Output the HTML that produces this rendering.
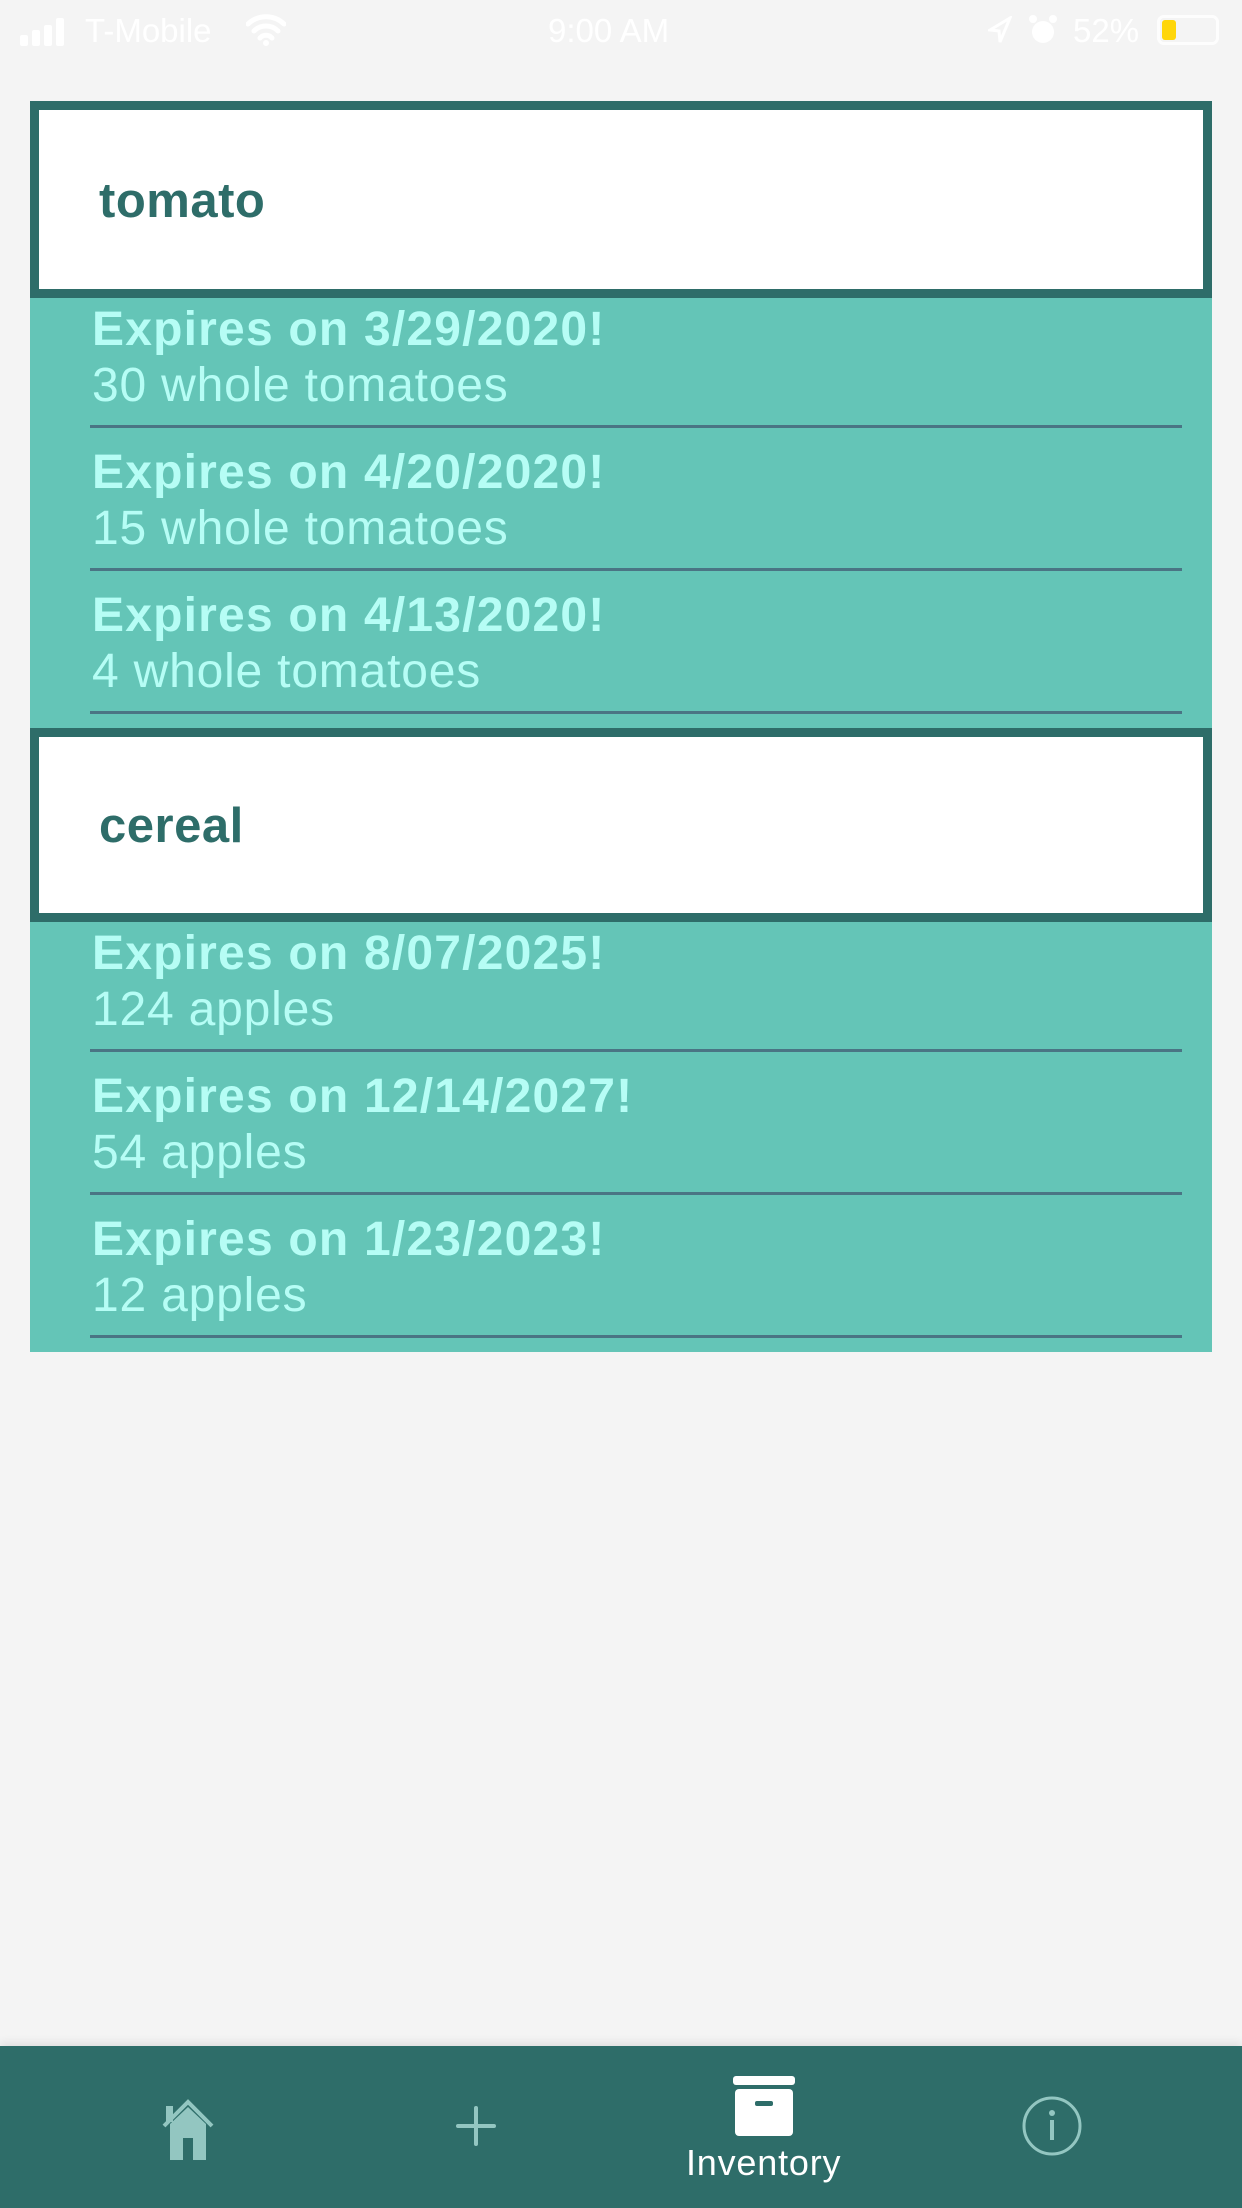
<!DOCTYPE html>
<html><head><meta charset="utf-8">
<style>
*{margin:0;padding:0;box-sizing:border-box}
body{width:1242px;height:2208px;background:#f4f4f4;position:relative;overflow:hidden;font-family:"Liberation Sans",sans-serif}
.status{position:absolute;top:0;left:0;width:1242px;height:62px;color:#fff;font-size:33px}
.card{position:absolute;left:30px;width:1182px;background:#fff;border:9px solid #2e6d69}
.card span{position:absolute;left:60px;font-weight:bold;font-size:49px;color:#2e6d69;letter-spacing:0.5px}
.list{position:absolute;left:30px;width:1182px;background:#64c5b7}
.row{position:relative;height:143px}
.row b{position:absolute;left:62px;top:4px;font-size:48px;color:#b6fdf5;white-space:nowrap;letter-spacing:1.2px}
.row i{position:absolute;left:62px;top:60px;font-style:normal;font-size:48px;color:#b6fdf5;white-space:nowrap;letter-spacing:0.8px}
.row u{position:absolute;left:60px;right:30px;top:127px;height:3px;background:#4a7584;text-decoration:none}
.bar{position:absolute;left:0;top:2046px;width:1242px;height:162px;background:#2e6d69;box-shadow:0 -4px 8px rgba(0,0,0,0.08)}
</style></head><body>
<div class="status">
 <div style="position:absolute;left:20px;top:18px;display:flex;align-items:flex-end;gap:4px">
  <div style="width:8px;height:11px;background:#fff;border-radius:2px"></div>
  <div style="width:8px;height:16px;background:#fff;border-radius:2px"></div>
  <div style="width:8px;height:21px;background:#fff;border-radius:2px"></div>
  <div style="width:8px;height:28px;background:#fff;border-radius:2px"></div>
 </div>
 <div style="position:absolute;left:85px;top:12px">T-Mobile</div>
 <svg style="position:absolute;left:246px;top:12px" width="40" height="34" viewBox="0 0 40 34"><path d="M2 12 A26 26 0 0 1 38 12 M8 19 A17 17 0 0 1 32 19 M14 26 A8 8 0 0 1 26 26" fill="none" stroke="#fff" stroke-width="5" stroke-linecap="round"/><circle cx="20" cy="31" r="3" fill="#fff"/></svg>
 <div style="position:absolute;left:548px;top:12px">9:00 AM</div>
 <svg style="position:absolute;left:988px;top:16px" width="24" height="28" viewBox="0 0 24 28"><path d="M22 2 L2 14 L11 15 L12 26 Z" fill="none" stroke="#fff" stroke-width="3"/></svg>
 <svg style="position:absolute;left:1028px;top:14px" width="30" height="32" viewBox="0 0 30 32"><circle cx="15" cy="18" r="11" fill="#fff"/><circle cx="5" cy="5" r="4" fill="#fff"/><circle cx="25" cy="5" r="4" fill="#fff"/></svg>
 <div style="position:absolute;left:1073px;top:12px">52%</div>
 <div style="position:absolute;left:1157px;top:15px;width:62px;height:30px;border:3px solid #fff;border-radius:7px;opacity:.8"></div>
 <div style="position:absolute;left:1162px;top:20px;width:14px;height:20px;background:#ffd60a;border-radius:3px"></div>
</div>

<div class="card" style="top:101px;height:197px"><span style="top:63px">tomato</span></div>
<div class="list" style="top:298px;height:430px">
 <div class="row"><b>Expires on 3/29/2020!</b><i>30 whole tomatoes</i><u></u></div>
 <div class="row"><b>Expires on 4/20/2020!</b><i>15 whole tomatoes</i><u></u></div>
 <div class="row"><b>Expires on 4/13/2020!</b><i>4 whole tomatoes</i><u></u></div>
</div>
<div class="card" style="top:728px;height:194px"><span style="top:61px">cereal</span></div>
<div class="list" style="top:922px;height:430px">
 <div class="row"><b>Expires on 8/07/2025!</b><i>124 apples</i><u></u></div>
 <div class="row"><b>Expires on 12/14/2027!</b><i>54 apples</i><u></u></div>
 <div class="row"><b>Expires on 1/23/2023!</b><i>12 apples</i><u></u></div>
</div>

<div class="bar">
 <svg style="position:absolute;left:156px;top:52px" width="64" height="64" viewBox="0 0 64 64">
  <path d="M8 28 L32 4 L56 28" fill="none" stroke="#93c6c1" stroke-width="4"/>
  <path d="M14 26 L32 9 L50 26 V62 H37 V40 H27 V62 H14 Z" fill="#93c6c1"/>
  <rect x="10" y="8" width="7" height="16" fill="#93c6c1"/>
 </svg>
 <svg style="position:absolute;left:456px;top:60px" width="40" height="40" viewBox="0 0 40 40">
  <path d="M20 2V38M2 20H38" stroke="#93c6c1" stroke-width="4" stroke-linecap="round"/>
 </svg>
 <svg style="position:absolute;left:733px;top:30px" width="62" height="60" viewBox="0 0 62 60">
  <rect x="0" y="0" width="62" height="9" rx="3" fill="#fff"/>
  <rect x="2" y="13" width="58" height="47" rx="4" fill="#fff"/>
  <rect x="22" y="25" width="18" height="5" rx="2" fill="#2e6d69"/>
 </svg>
 <div style="position:absolute;left:686px;top:96px;font-size:36px;color:#fff;letter-spacing:0.8px">Inventory</div>
 <svg style="position:absolute;left:1020px;top:48px" width="64" height="64" viewBox="0 0 64 64">
  <circle cx="32" cy="32" r="28" fill="none" stroke="#93c6c1" stroke-width="3"/>
  <circle cx="32" cy="19" r="3" fill="#93c6c1"/>
  <rect x="30" y="26" width="4" height="20" fill="#93c6c1"/>
 </svg>
</div>
</body></html>
